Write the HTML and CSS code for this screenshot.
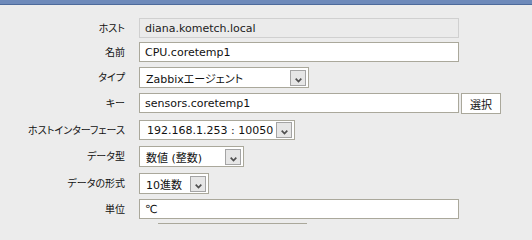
FILE: index.html
```html
<!DOCTYPE html>
<html lang="ja">
<head>
<meta charset="utf-8">
<title>アイテムの設定</title>
<link rel="stylesheet" href="styles.css">
</head>
<body>
<div class="topbar"></div>
<form class="form">
  <label class="lbl">ホスト</label>
  <div class="cell"><input class="txt txt-disabled" value="diana.kometch.local" readonly></div>

  <label class="lbl">名前</label>
  <div class="cell"><input class="txt" value="CPU.coretemp1"></div>

  <label class="lbl">タイプ</label>
  <div class="cell"><div class="sel sel-type"><span class="sel-val">Zabbixエージェント</span><span class="arrow"><svg width="7" height="5" viewBox="0 0 7 5"><path d="M0.7 0.7 L3.5 3.5 L6.3 0.7" fill="none" stroke="#4f4f4f" stroke-width="1.7"/></svg></span></div></div>

  <label class="lbl">キー</label>
  <div class="cell"><input class="txt" value="sensors.coretemp1"><button type="button" class="btn">選択</button></div>

  <label class="lbl">ホストインターフェース</label>
  <div class="cell"><div class="sel sel-iface"><span class="sel-val">192.168.1.253 : 10050</span><span class="arrow"><svg width="7" height="5" viewBox="0 0 7 5"><path d="M0.7 0.7 L3.5 3.5 L6.3 0.7" fill="none" stroke="#4f4f4f" stroke-width="1.7"/></svg></span></div></div>

  <label class="lbl">データ型</label>
  <div class="cell"><div class="sel sel-dtype"><span class="sel-val">数値 (整数)</span><span class="arrow"><svg width="7" height="5" viewBox="0 0 7 5"><path d="M0.7 0.7 L3.5 3.5 L6.3 0.7" fill="none" stroke="#4f4f4f" stroke-width="1.7"/></svg></span></div></div>

  <label class="lbl">データの形式</label>
  <div class="cell"><div class="sel sel-fmt"><span class="sel-val">10進数</span><span class="arrow"><svg width="7" height="5" viewBox="0 0 7 5"><path d="M0.7 0.7 L3.5 3.5 L6.3 0.7" fill="none" stroke="#4f4f4f" stroke-width="1.7"/></svg></span></div></div>

  <label class="lbl">単位</label>
  <div class="cell"><input class="txt" value="℃"></div>

  <span class="lbl"></span>
  <div class="cell"><div class="next-box"></div></div>
</form>
</body>
</html>
```
FILE: styles.css
```css
html, body {
  margin: 0;
  padding: 0;
  background: #ececec;
}
html {
  height: 224px;
  overflow: hidden;
}
body {
  font-family: "DejaVu Sans", "Noto Sans CJK JP", sans-serif;
  font-size: 11px;
  color: #111;
  overflow: hidden;
  height: 224px;
}
.topbar {
  height: 4px;
  background: #6e8aba;
  border-bottom: 1px solid #4d6a9b;
}
.form {
  display: grid;
  grid-template-columns: 125px 1fr;
  grid-template-rows: 24px 25px 26px 27px 26px 27px 26px 24px 1px;
  column-gap: 14px;
  margin: 13px 0 0;
}
.lbl {
  font-family: "Noto Sans CJK JP", sans-serif;
  font-feature-settings: "palt";
  font-size: 10px;
  color: #111;
  text-align: right;
  height: 20px;
  line-height: 20px;
}
.cell {
  display: flex;
  align-items: flex-start;
  gap: 2px;
}
.txt {
  box-sizing: border-box;
  width: 320px;
  height: 20px;
  margin: 0;
  padding: 0 5px;
  border: 1px solid #aaa89b;
  background: #fff;
  font-family: "DejaVu Sans", "Noto Sans CJK JP", sans-serif;
  font-feature-settings: "palt";
  font-size: 11px;
  color: #111;
  outline: none;
}
.txt-disabled {
  border-color: #d0d0d0;
  background: #ebebeb;
  color: #222;
}
.btn {
  box-sizing: border-box;
  width: 40px;
  height: 21px;
  margin: 0;
  padding: 0;
  border: 1px solid #aaa89b;
  background: #fff;
  font-family: "Noto Sans CJK JP", sans-serif;
  font-size: 11px;
  color: #111;
}
.sel {
  box-sizing: border-box;
  height: 21px;
  border: 1px solid #aaa89b;
  background: #fff;
  display: flex;
  align-items: center;
  padding-left: 6px;
  padding-right: 2px;
  overflow: hidden;
}
.sel-val {
  flex: 1;
  white-space: nowrap;
  overflow: hidden;
  font-feature-settings: "palt";
}
.arrow {
  box-sizing: border-box;
  flex: none;
  width: 16px;
  height: 16px;
  border: 1px solid #a4a4a4;
  background: #e6e6e6;
  display: flex;
  justify-content: center;
  align-items: flex-end;
  padding-bottom: 2px;
}
.arrow svg {
  display: block;
}
.sel-type { width: 170px; }
.sel-iface { width: 156px; height: 20px; padding-left: 7px; }
.sel-iface .sel-val { overflow: visible; }
.sel-dtype { width: 105px; }
.sel-fmt { width: 70px; }
.next-box {
  margin-left: 19px;
  width: 149px;
  height: 0;
  border-top: 1px solid #aaa89b;
}
```
